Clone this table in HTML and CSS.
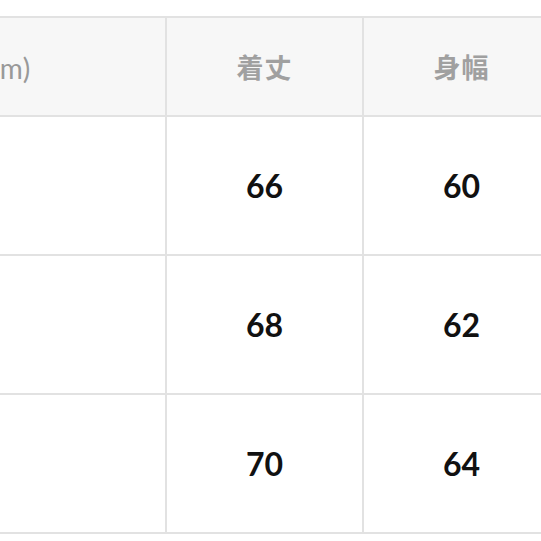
FILE: index.html
```html
<!DOCTYPE html>
<html lang="ja">
<head>
<meta charset="utf-8">
<link rel="stylesheet" href="styles.css">
</head>
<body>
<div class="frame">
  <table class="size-table">
    <colgroup>
      <col class="col-label">
      <col class="col-val">
      <col class="col-val">
      <col class="col-val">
    </colgroup>
    <thead>
      <tr>
        <th class="label">サイズ(cm)</th>
        <th>着丈</th>
        <th>身幅</th>
        <th></th>
      </tr>
    </thead>
    <tbody>
      <tr><td></td><td>66</td><td>60</td><td></td></tr>
      <tr><td></td><td>68</td><td>62</td><td></td></tr>
      <tr><td></td><td>70</td><td>64</td><td></td></tr>
    </tbody>
  </table>
</div>
</body>
</html>
```
FILE: styles.css
```css
html, body {
  margin: 0;
  padding: 0;
  background: #ffffff;
  overflow: hidden;
}
.frame {
  width: 541px;
  height: 541px;
  overflow: hidden;
  padding-top: 16px;
  box-sizing: border-box;
}
.size-table {
  margin-left: -235px;
  border-collapse: collapse;
  table-layout: fixed;
  width: 991px;
  font-family: Lato, "Noto Sans CJK JP", sans-serif;
}
.col-label { width: 400px; }
.col-val { width: 197px; }
.size-table th,
.size-table td {
  border: 2px solid #e2e2e2;
  text-align: center;
  vertical-align: middle;
  padding: 0;
}
.size-table th {
  height: 97px;
  background: #f7f7f7;
  color: #a0a0a0;
  font-size: 27px;
  font-weight: 700;
  letter-spacing: 1px;
}
.size-table th.label {
  font-weight: 400;
  letter-spacing: 0;
  font-size: 28px;
  padding-right: 6px;
  color: #999999;
}
.size-table td {
  height: 137px;
  color: #111111;
  font-size: 32px;
  font-weight: 700;
}
```
